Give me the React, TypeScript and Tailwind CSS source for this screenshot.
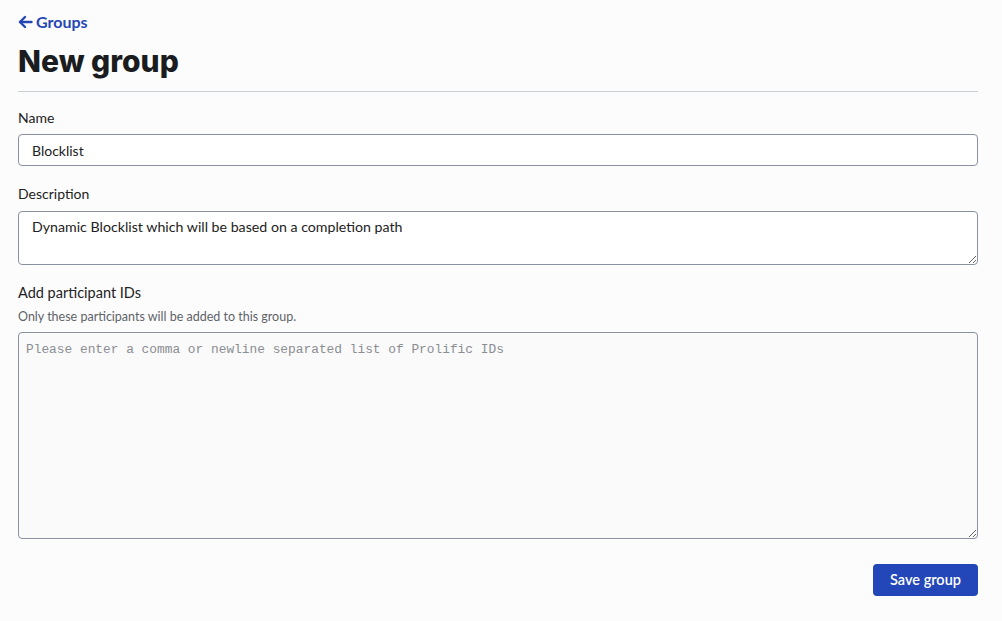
import React from "react";

export default function App() {
  return (
    <div className="min-h-[621px] w-full bg-[#fcfcfd] text-[#1d1f22]" style={{ fontFamily: "Lato, 'Noto Sans', sans-serif" }}>
      <div className="pl-[18px] pr-[24px] pt-[11px]">
        <a className="flex items-center gap-[3px] text-[16px] font-bold text-[#2547b5] leading-[22px]" href="#">
          <svg width="15" height="14" viewBox="0 0 15 14" fill="none" stroke="currentColor" strokeWidth="2.4" strokeLinecap="round" strokeLinejoin="round">
            <path d="M13.5 7H2" />
            <path d="M7 2L2 7l5 5" />
          </svg>
          <span>Groups</span>
        </a>
        <h1
          className="mt-[8px] text-[30px] font-extrabold leading-[40px] text-[#1a1c1f]"
          style={{ fontFamily: "Inter, Lato, sans-serif" }}
        >
          New group
        </h1>
        <div className="mt-[10px] h-px bg-[#c9d0d6]" />

        <form className="mt-[16px] flex flex-col">
          <label className="text-[14px] leading-[20px] text-[#222]">Name</label>
          <input
            className="mt-[6px] h-[32px] w-full rounded-[4px] border border-[#8a91a0] bg-white px-[13px] text-[14px] text-[#222] outline-none"
            defaultValue="Blocklist"
          />
          <label className="mt-[18px] text-[14px] leading-[20px] text-[#222]">Description</label>
          <textarea
            className="mt-[7px] h-[54px] w-full rounded-[4px] border border-[#8a91a0] bg-white px-[13px] py-[5px] text-[14.2px] leading-[20px] text-[#222] outline-none"
            defaultValue="Dynamic Blocklist which will be based on a completion path"
          />
          <label className="mt-[18px] text-[14.5px] leading-[20px] text-[#222]">Add participant IDs</label>
          <p className="mt-[6px] text-[12.5px] leading-[16px] text-[#5f6368]">Only these participants will be added to this group.</p>
          <textarea
            className="mt-[7px] h-[207px] w-full rounded-[4px] border border-[#8a91a0] bg-[#fafafb] px-[7px] pt-[8px] text-[12.85px] leading-[18px] text-[#222] outline-none placeholder:text-[#8a8d92]"
            style={{ fontFamily: "'Liberation Mono', monospace" }}
            placeholder="Please enter a comma or newline separated list of Prolific IDs"
          />
          <div className="mt-[25px] flex justify-end">
            <button type="button" className="h-[32px] w-[105px] rounded-[4px] bg-[#2347b8] text-[14.5px] font-semibold text-white">
              Save group
            </button>
          </div>
        </form>
      </div>
    </div>
  );
}
